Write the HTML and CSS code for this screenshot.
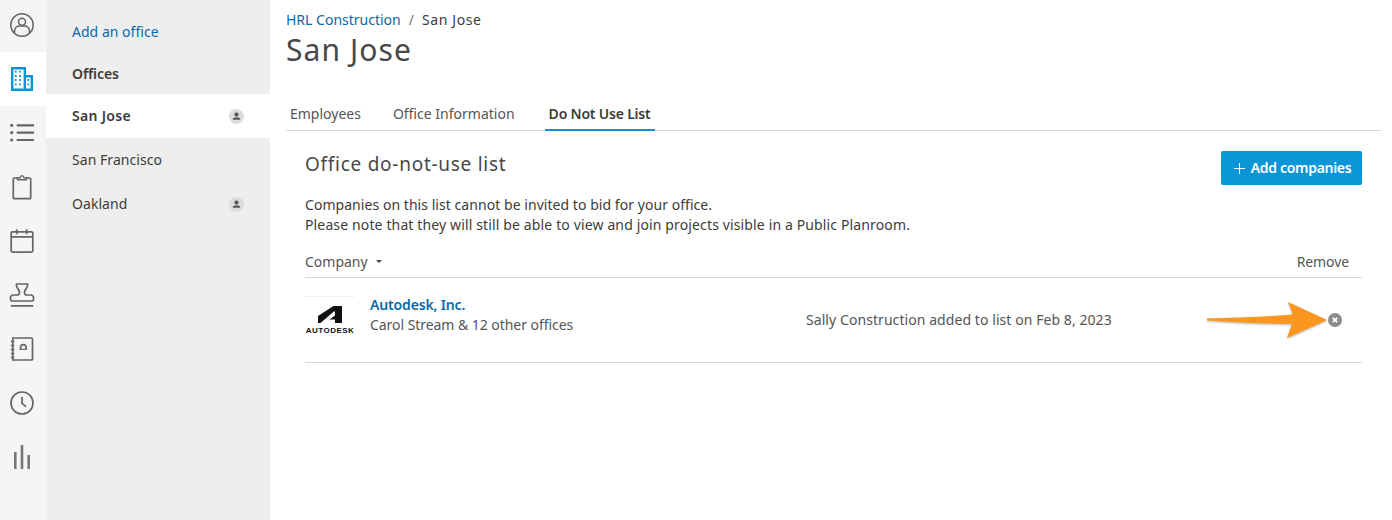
FILE: index.html
```html
<!DOCTYPE html>
<html lang="en">
<head>
<meta charset="utf-8">
<title>San Jose</title>
<link rel="stylesheet" href="styles.css">
</head>
<body>
<div class="app">
  <nav class="rail">
    <a class="rail-item first"><svg class="ico" viewBox="0 0 24 24"><circle cx="12" cy="12" r="11.200"/><circle cx="12" cy="8.800" r="3.500"/><path d="M4.600 19.800v-2c0-3 2.600-4.800 4.800-4.800h5.200c2.200 0 4.800 1.800 4.800 4.800v2"/></svg></a>
    <a class="rail-item active"><svg class="ico" viewBox="0 0 24 24"><path class="thick" d="M2.200 22.800V1.200h12.600v21.600zM14.800 9.200h7v13.600h-7"/><path class="dots" d="M4.800 4.700h1.800M9.100 4.700h1.800M4.800 9h1.800M9.100 9h1.800M4.800 13h1.800M9.100 13h1.800M4.800 17.300h1.800M9.100 17.300h1.800M17.400 13h1.800M17.400 17.300h1.800"/></svg></a>
    <a class="rail-item"><svg class="ico" viewBox="0 0 24 24"><path class="thick" d="M6.700 4.300H24M6.700 11.700H24M6.700 19H24"/><circle class="solid" cx="1.700" cy="4.300" r="1.600"/><circle class="solid" cx="1.700" cy="11.700" r="1.600"/><circle class="solid" cx="1.700" cy="19" r="1.600"/></svg></a>
    <a class="rail-item"><svg class="ico" viewBox="0 0 24 24"><path class="mid" d="M7.500 3H4.300a1 1 0 0 0-1 1v18.700a1 1 0 0 0 1 1h15.400a1 1 0 0 0 1-1V4a1 1 0 0 0-1-1h-3.200"/><path d="M7.500 4.800V2.800h2.500C10.300 1.500 11 .8 12 .8s1.700.7 2 2h2.500v2z"/></svg></a>
    <a class="rail-item"><svg class="ico" viewBox="0 0 24 24"><path class="mid" d="M2.500 2.800h19a1.300 1.300 0 0 1 1.300 1.300v17.700a1.300 1.300 0 0 1-1.300 1.300h-19a1.300 1.300 0 0 1-1.300-1.300V4.100a1.300 1.300 0 0 1 1.300-1.300zM1.200 7.800h21.600M6.700.3v5M16.700.3v5"/></svg></a>
    <a class="rail-item"><svg class="ico" viewBox="0 0 24 24"><path class="mid" d="M6.500 1h11v1.800c0 2.400-3 3.400-3 6.400 0 1.700.8 2.800 2.300 2.800h3.700c1.900 0 3 1.100 3 2.800v1.700c0 .9-.6 1.500-1.500 1.500h-20c-.9 0-1.500-.6-1.500-1.500V14.800c0-1.700 1.100-2.800 3-2.800h3.700c1.500 0 2.300-1.100 2.300-2.800 0-3-3-4-3-6.400zM.8 22.800h22.400"/></svg></a>
    <a class="rail-item"><svg class="ico" viewBox="0 0 24 24"><path class="mid" d="M2.800 1h18.700a1 1 0 0 1 1 1v20a1 1 0 0 1-1 1H2.800zM.8 4.500h3.500M.8 8.500h3.500M.8 12.500h3.500M.8 16.500h3.500M.8 20.500h3.500"/><path class="mid" d="M10.500 13v-2.500a2.800 2.800 0 0 1 5.600 0V13"/><path class="solid-line" d="M11 12.300h4.600"/></svg></a>
    <a class="rail-item"><svg class="ico" viewBox="0 0 24 24"><circle class="mid" cx="12" cy="12" r="11"/><path class="mid" d="M12 5.700v6.600l4 3.400"/></svg></a>
    <a class="rail-item"><svg class="ico" viewBox="0 0 24 24"><path class="bars" d="M5.300 7V24M12 0V24M18.700 10V24"/></svg></a>
  </nav>

  <aside class="side">
    <a class="side-add">Add an office</a>
    <div class="side-title">Offices</div>
    <a class="side-row current"><span>San Jose</span><svg class="badge" viewBox="0 0 16 16"><circle class="badge-bg" cx="8" cy="8" r="8"/><circle class="badge-fg" cx="8" cy="5.800" r="2.200"/><path class="badge-fg" d="M4 11.500c0-1.800 1.800-2.600 4-2.600s4 .8 4 2.600z"/></svg></a>
    <a class="side-row"><span>San Francisco</span></a>
    <a class="side-row"><span>Oakland</span><svg class="badge" viewBox="0 0 16 16"><circle class="badge-bg" cx="8" cy="8" r="8"/><circle class="badge-fg" cx="8" cy="5.800" r="2.200"/><path class="badge-fg" d="M4 11.500c0-1.800 1.800-2.600 4-2.600s4 .8 4 2.600z"/></svg></a>
  </aside>

  <main class="main">
    <div class="crumbs"><a class="crumb-link">HRL Construction</a><span class="crumb-sep">/</span><span class="crumb-now">San Jose</span></div>
    <h1 class="title">San Jose</h1>
    <div class="tabs">
      <a class="tab">Employees</a>
      <a class="tab">Office Information</a>
      <a class="tab selected">Do Not Use List</a>
    </div>
    <section class="panel">
      <div class="panel-head">
        <h2 class="panel-title">Office do-not-use list</h2>
        <button class="btn"><svg class="plus" viewBox="0 0 11 11"><path d="M5.500 0v11M0 5.500h11"/></svg><span class="btn-label">Add companies</span></button>
      </div>
      <div class="note">
        <div class="note-a">Companies on this list cannot be invited to bid for your office.</div>
        <div class="note-b">Please note that they will still be able to view and join projects visible in a Public Planroom.</div>
      </div>
      <div class="table-head">
        <span class="th-company">Company<i class="caret"></i></span>
        <span class="th-remove">Remove</span>
      </div>
      <div class="row">
        <div class="logo">
          <svg class="logo-mark" viewBox="0 0 24 17"><path d="M0 17V10L15.500 0H24V17H17V13.500H11.500L17 9.500V5.500H15.800L2.500 17z"/></svg>
          <span class="logo-text">AUTODESK</span>
        </div>
        <div class="company">
          <a class="company-name">Autodesk, Inc.</a>
          <div class="company-sub">Carol Stream &amp; 12 other offices</div>
        </div>
        <div class="added">Sally Construction added to list on Feb 8, 2023</div>
        <svg class="remove" viewBox="0 0 14 14"><circle cx="7" cy="7" r="7"/><path d="M4.800 4.800l4.400 4.400M9.200 4.800l-4.400 4.400"/></svg>
      </div>
      <svg class="arrow" viewBox="0 0 124 54"><path d="M2 18.500C30 18 60 17 88 14.500L83 2 122 20 82 38 87 24C60 24 30 22 2 20.500z"/></svg>
    </section>
  </main>
</div>
</body>
</html>
```

FILE: styles.css
```css
* { box-sizing: border-box; }
html, body { margin: 0; height: 100%; }
body { background: #fff; font-family: "Noto Sans", "Open Sans", sans-serif; font-size: 14px; color: #3c3c3c; overflow: hidden; }
.app { display: flex; height: 520px; }

.rail { width: 46px; flex: none; background: #f5f5f5; display: flex; flex-direction: column; }
.rail-item { height: 54px; display: flex; align-items: center; justify-content: center; padding-right: 2px; }
.rail-item.first { height: 52px; padding-bottom: 2px; }
.rail-item.active { background: #fff; }
.ico { width: 24px; height: 24px; fill: none; stroke: #666; stroke-width: 1.500; overflow: visible; }
.ico .mid { stroke-width: 1.700; }
.ico .thick { stroke-width: 2.200; }
.ico .bars { stroke-width: 2.600; stroke: #777; }
.ico .solid { fill: #666; stroke: none; }
.ico .solid-line { stroke-width: 1.200; }
.rail-item.active .ico { stroke: #0a96d6; }
.rail-item.active .thick { stroke-width: 2.400; }
.rail-item.active .dots { stroke-width: 1.800; }

.side { width: 224px; flex: none; background: #eee; padding-top: 10px; }
.side-add { display: block; height: 44px; line-height: 44px; padding-left: 26px; color: #0a69a8; letter-spacing: .02px; }
.side-title { height: 40px; line-height: 40px; padding-left: 26px; font-weight: 600; letter-spacing: -.1px; }
.side-row { height: 44px; display: flex; align-items: center; justify-content: space-between; padding: 0 26px; letter-spacing: .05px; }
.side-row span { padding-bottom: 2px; }
.side-row.current { background: #fff; font-weight: 600; letter-spacing: .3px; }
.badge { width: 15px; height: 15px; }
.badge-bg { fill: #dcdcdc; }
.badge-fg { fill: #555; }

.main { flex: 1; min-width: 0; padding: 0 11px 0 16px; }
.crumbs { padding-top: 10px; height: 31px; line-height: 20px; display: flex; letter-spacing: 0; }
.crumb-link { color: #0a69a8; }
.crumb-sep { margin: 0 8px; color: #777; }
.crumb-now { letter-spacing: .62px; }
.title { margin: 0; font-size: 30px; font-weight: 400; line-height: 38px; letter-spacing: 1.100px; color: #484848; }
.tabs { display: flex; gap: 24px; margin-top: 27px; height: 35px; border-bottom: 1px solid #d9d9d9; }
.tab { height: 35px; line-height: 35px; padding: 0 4px; color: #555; letter-spacing: 0; }
.tab.selected { color: #3c3c3c; font-weight: 600; border-bottom: 2px solid #0a96d6; letter-spacing: -.2px; margin-left: 2px; }

.panel { position: relative; margin: 0 19px; }
.panel-head { display: flex; justify-content: space-between; align-items: flex-start; padding-top: 20px; height: 54px; }
.panel-title { margin: 0; font-size: 19px; font-weight: 400; line-height: 26px; letter-spacing: .73px; color: #484848; }
.btn { height: 34px; width: 141px; border: 0; border-radius: 2px; background: #0a96d6; color: #fff; font: 600 14px "Noto Sans", sans-serif; letter-spacing: -.3px; display: flex; align-items: center; justify-content: center; gap: 6px; padding: 0 0 0 2px; }
.btn-label { padding-bottom: 2px; }
.plus { width: 11px; height: 11px; fill: none; stroke: #fff; stroke-width: 1; }
.note { margin: 10px 0 0; line-height: 20px; }
.note-a { letter-spacing: .05px; }
.note-b { letter-spacing: .135px; }
.table-head { margin-top: 11px; height: 32px; display: flex; justify-content: space-between; align-items: center; border-bottom: 1px solid #d9d9d9; color: #555; padding-right: 13px; }
.th-company { display: flex; align-items: center; letter-spacing: 0; }
.caret { margin-left: 8px; border: 3px solid transparent; border-top: 3px solid #444; border-bottom: 0; }
.th-remove { letter-spacing: -.1px; }
.row { height: 85px; display: flex; align-items: center; border-bottom: 1px solid #d9d9d9; }
.logo { width: 50px; height: 40px; flex: none; border-top: 1px solid #f2f2f2; display: flex; flex-direction: column; align-items: center; margin: 0 15px 8px 0; padding-top: 9px; }
.logo-mark { width: 24px; height: 17px; fill: #111; flex: none; }
.logo-text { font: 700 8px "Liberation Sans", sans-serif; color: #111; letter-spacing: .5px; line-height: 10px; margin-top: 3px; white-space: nowrap; }
.company { width: 436px; flex: none; line-height: 20px; margin-bottom: 10px; }
.company-name { color: #0a69a8; font-weight: 600; letter-spacing: -.15px; }
.company-sub { color: #555; letter-spacing: -.05px; }
.added { flex: 1; color: #555; letter-spacing: .07px; padding-bottom: 2px; }
.remove { width: 14px; height: 14px; flex: none; margin-right: 20px; }
.remove circle { fill: #8c8c8c; }
.remove path { stroke: #fff; stroke-width: 1.800; fill: none; }
.arrow { position: absolute; left: 900px; top: 169px; width: 124px; height: 54px; fill: #fb971e; filter: drop-shadow(0 1px 1px rgba(0,0,0,.3)); }
```
